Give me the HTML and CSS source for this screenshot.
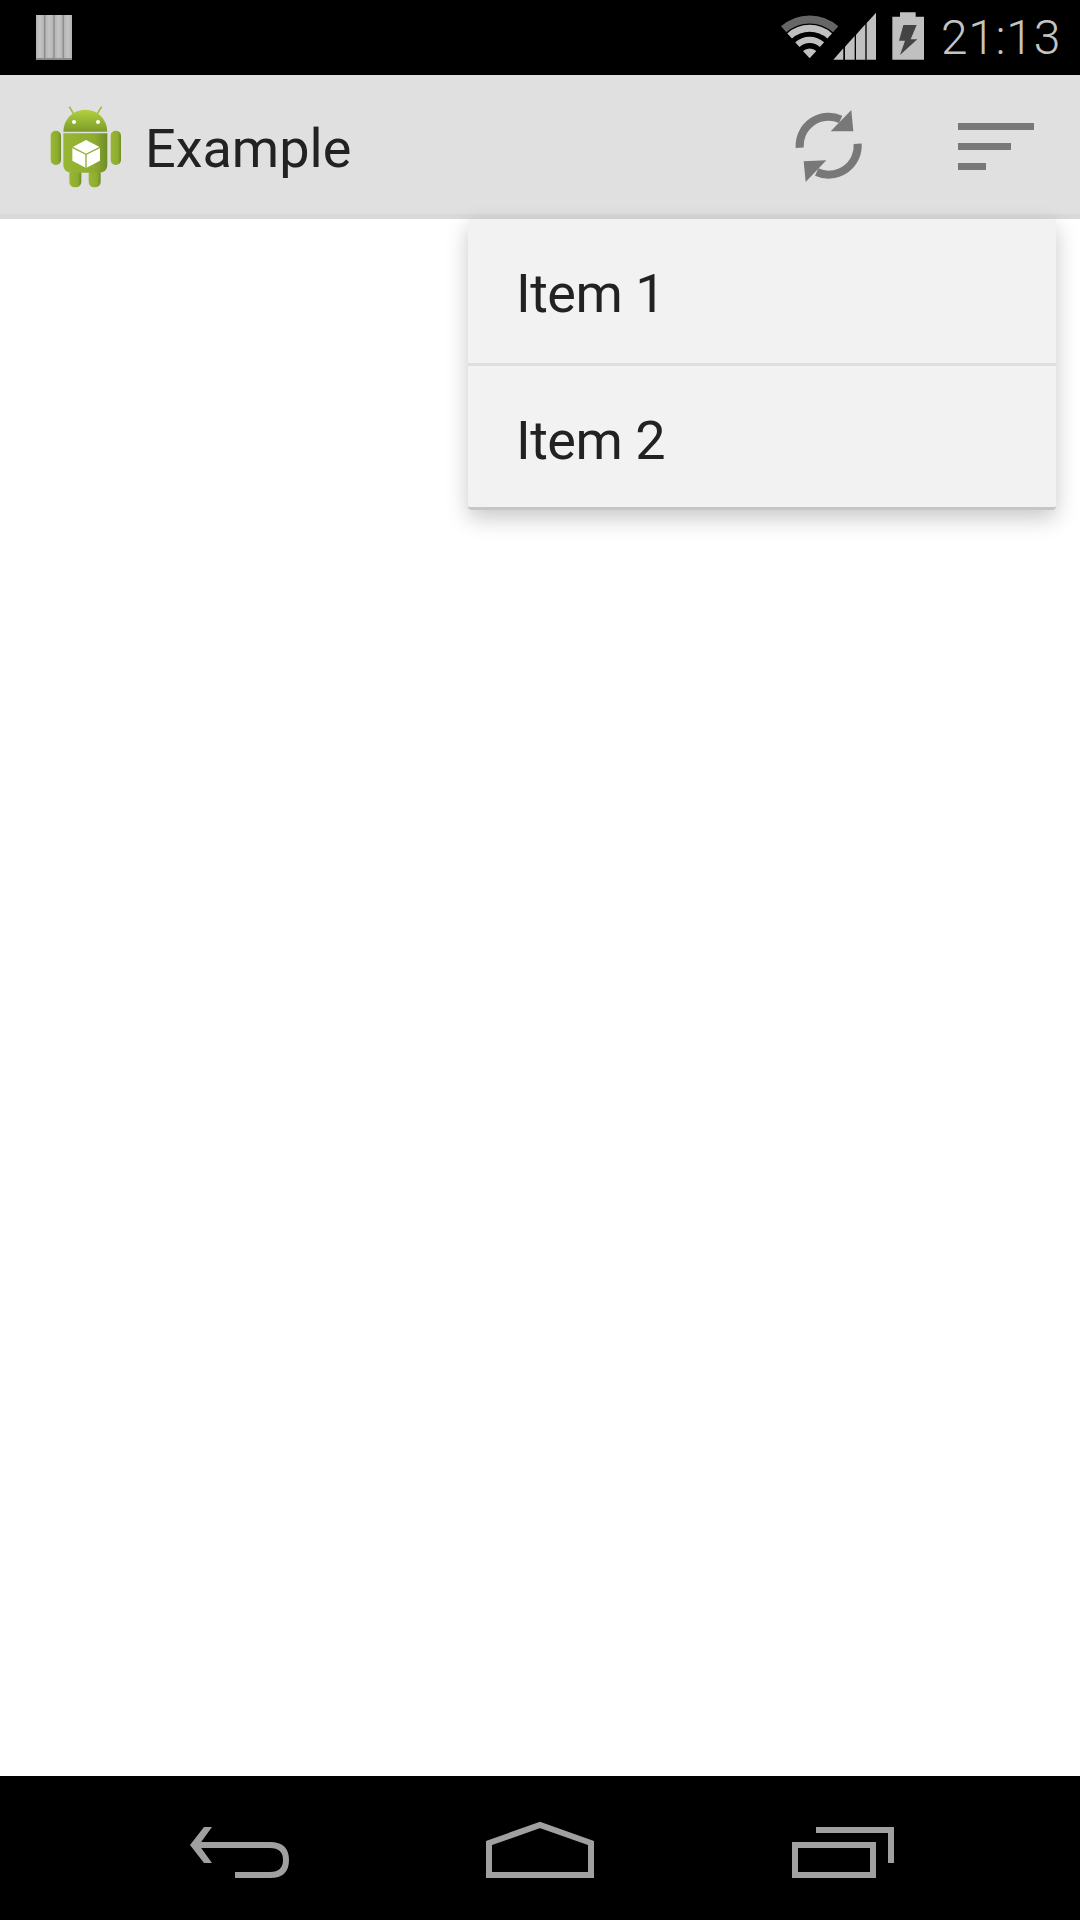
FILE: index.html
```html
<!DOCTYPE html>
<html lang="en">
<head>
    <meta charset="UTF-8">
    <meta name="viewport" content="width=device-width, initial-scale=1.0">
    <title>Example</title>
    <link rel="stylesheet" href="styles.css">
</head>
<body>
    <div class="screen">

        <div class="status-bar">
            <svg class="grip-icon" viewBox="0 0 36 45">
                <defs>
                    <linearGradient id="gripFill" x1="0" y1="0" x2="1" y2="0">
                        <stop offset="0" stop-color="#b4b4b4"/>
                        <stop offset="0.5" stop-color="#c4c4c4"/>
                        <stop offset="1" stop-color="#b4b4b4"/>
                    </linearGradient>
                </defs>
                <rect x="0" y="0" width="36" height="45" fill="#8a8a8a"/>
                <rect x="0" y="0" width="8" height="43" fill="url(#gripFill)"/>
                <rect x="9.3" y="0" width="8" height="43" fill="url(#gripFill)"/>
                <rect x="18.6" y="0" width="8" height="43" fill="url(#gripFill)"/>
                <rect x="27.9" y="0" width="8" height="43" fill="url(#gripFill)"/>
            </svg>
            <div class="status-right">
                <svg class="status-icons" viewBox="120 36 435 153">
                    <!-- wifi -->
                    <g transform="translate(209 175)" fill="none" stroke-width="24">
                        <path d="M-78 -87 A117 117 0 0 1 78 -87" stroke="#666666"/>
                        <path d="M-60 -67 A90 90 0 0 1 60 -67" stroke="#c0c0c0" stroke-width="21"/>
                        <path d="M-37 -41 A55 55 0 0 1 37 -41" stroke="#c0c0c0" stroke-width="19"/>
                        <path d="M0 0 L-20 -22 A30 30 0 0 1 20 -22 Z" fill="#c0c0c0" stroke="none"/>
                    </g>
                    <!-- signal -->
                    <g fill="#c0c0c0">
                        <polygon points="280,179 310,145 310,179"/>
                        <polygon points="315,140 344,108 344,179 315,179"/>
                        <polygon points="348,104 376,73 376,179 348,179"/>
                        <polygon points="380,69 408,38 408,179 380,179"/>
                    </g>
                    <!-- battery -->
                    <path d="M480 37 H527 V50 H552 V179 H457 V50 H480 Z" fill="#c0c0c0"/>
                    <polygon points="490,75 530,75 512,118 532,118 480,165 495,122 477,122" fill="#444444"/>
                </svg>
                <span class="clock">21:13</span>
            </div>
        </div>

        <div class="action-bar">
            <svg class="app-icon" viewBox="0 3 330 330">
                <defs>
                    <linearGradient id="headFill" x1="0" y1="0" x2="0" y2="1">
                        <stop offset="0" stop-color="#b2d13e"/>
                        <stop offset="1" stop-color="#7c9c2a"/>
                    </linearGradient>
                    <linearGradient id="bodyFill" x1="0" y1="0" x2="1" y2="0">
                        <stop offset="0" stop-color="#99b733"/>
                        <stop offset="0.7" stop-color="#8dac2f"/>
                        <stop offset="1" stop-color="#6f8d26"/>
                    </linearGradient>
                </defs>
                <path d="M118 50 L132 74 M215 50 L200 74" stroke="#9cc038" stroke-width="5" fill="none"/>
                <path d="M100 125 A66 66 0 0 1 232 125 Z" fill="url(#headFill)"/>
                <circle cx="132" cy="96" r="6" fill="#fff"/>
                <circle cx="204" cy="96" r="6" fill="#fff"/>
                <rect x="62" y="122" width="31" height="103" rx="15" fill="url(#bodyFill)"/>
                <rect x="242" y="122" width="31" height="103" rx="15" fill="url(#bodyFill)"/>
                <rect x="118" y="235" width="36" height="57" rx="16" fill="url(#bodyFill)"/>
                <rect x="176" y="235" width="36" height="57" rx="16" fill="url(#bodyFill)"/>
                <path d="M100 130 H232 V226 A22 22 0 0 1 210 248 H122 A22 22 0 0 1 100 226 Z" fill="url(#bodyFill)"/>
                <polygon points="168,150 210,172 210,212 168,234 127,212 127,172" fill="#fff"/>
                <path d="M127 172 L168 193 L210 172 M168 193 V234" stroke="#8fae32" stroke-width="4" fill="none"/>
            </svg>
            <span class="app-title">Example</span>
            <div class="actions">
                <svg class="refresh-icon" viewBox="160 330 210 222">
                    <g fill="none" stroke="#787878" stroke-width="24">
                        <path d="M180 446 A87 87 0 0 1 303 361"/>
                        <path d="M354 434 A87 87 0 0 1 231 519"/>
                    </g>
                    <polygon points="335,333 341,397 273,397" fill="#787878"/>
                    <polygon points="198,549 192,487 260,484" fill="#787878"/>
                </svg>
                <svg class="sort-icon" viewBox="0 0 76 48">
                    <rect x="0" y="1" width="76" height="7" fill="#787878"/>
                    <rect x="0" y="21" width="53" height="7" fill="#787878"/>
                    <rect x="0" y="41" width="28" height="7" fill="#787878"/>
                </svg>
            </div>
        </div>

        <div class="content">
            <div class="dropdown">
                <div class="dropdown-item">Item 1</div>
                <div class="dropdown-item">Item 2</div>
            </div>
        </div>

        <div class="nav-bar">
            <svg class="nav-icon" viewBox="0 0 120 72">
                <polygon points="32,15 24,15 10,33 24,51 32,51 19,33" fill="#a0a0a0"/>
                <path d="M17 33 H90 Q106 33 106 48 Q106 63 90 63 H55" fill="none" stroke="#a0a0a0" stroke-width="6"/>
            </svg>
            <svg class="nav-icon" viewBox="0 0 120 72">
                <path d="M9 31 L60 13 L111 31 V63 H9 Z" fill="none" stroke="#a0a0a0" stroke-width="6"/>
            </svg>
            <svg class="nav-icon" viewBox="0 0 120 72">
                <rect x="15" y="33" width="78" height="30" fill="none" stroke="#a0a0a0" stroke-width="6"/>
                <path d="M36 18 H111 V51" fill="none" stroke="#a0a0a0" stroke-width="6"/>
            </svg>
        </div>

    </div>
</body>
</html>
```

FILE: styles.css
```css
body {
    margin: 0;
    font-family: Roboto, "Noto Sans", sans-serif;
    background-color: #fff;
    color: #222;
}
.screen {
    display: flex;
    flex-direction: column;
    width: 1080px;
    height: 1920px;
    overflow: hidden;
}
.status-bar {
    display: flex;
    justify-content: space-between;
    align-items: center;
    flex-shrink: 0;
    height: 75px;
    padding: 0 19px 0 36px;
    background-color: #000;
}
.grip-icon {
    width: 36px;
    height: 45px;
}
.status-right {
    display: flex;
    align-items: center;
}
.status-icons {
    width: 145px;
    height: 51px;
}
.clock {
    margin-left: 16px;
    font-size: 48px;
    font-weight: 300;
    letter-spacing: 0.7px;
    line-height: 75px;
    color: #c4c4c4;
}
.action-bar {
    display: flex;
    align-items: center;
    flex-shrink: 0;
    height: 136px;
    padding: 3px 46px 0 30px;
    background-color: #e0e0e0;
    border-bottom: 5px solid #d9d9d9;
}
.app-icon {
    width: 110px;
    height: 110px;
}
.app-title {
    margin-left: 5px;
    padding-top: 5px;
    font-size: 54px;
}
.actions {
    display: flex;
    align-items: center;
    gap: 95px;
    margin-left: auto;
}
.refresh-icon {
    width: 70px;
    height: 74px;
}
.sort-icon {
    width: 76px;
    height: 48px;
}
.content {
    flex: 1;
    position: relative;
}
.dropdown {
    position: absolute;
    top: 0;
    right: 24px;
    width: 588px;
    background-color: #f2f2f2;
    border-bottom: 3px solid #c6c6c6;
    border-radius: 0 0 4px 4px;
    box-shadow: 0 8px 22px rgba(0, 0, 0, 0.22);
}
.dropdown-item {
    box-sizing: border-box;
    display: flex;
    align-items: center;
    height: 144px;
    padding: 5px 0 0 48px;
    font-size: 54px;
    letter-spacing: -0.5px;
}
.dropdown-item + .dropdown-item {
    padding-top: 8px;
    border-top: 3px solid #dfdfdf;
}
.nav-bar {
    display: flex;
    justify-content: space-between;
    align-items: center;
    flex-shrink: 0;
    height: 144px;
    padding: 0 180px;
    background-color: #000;
}
.nav-icon {
    width: 120px;
    height: 72px;
}
```
